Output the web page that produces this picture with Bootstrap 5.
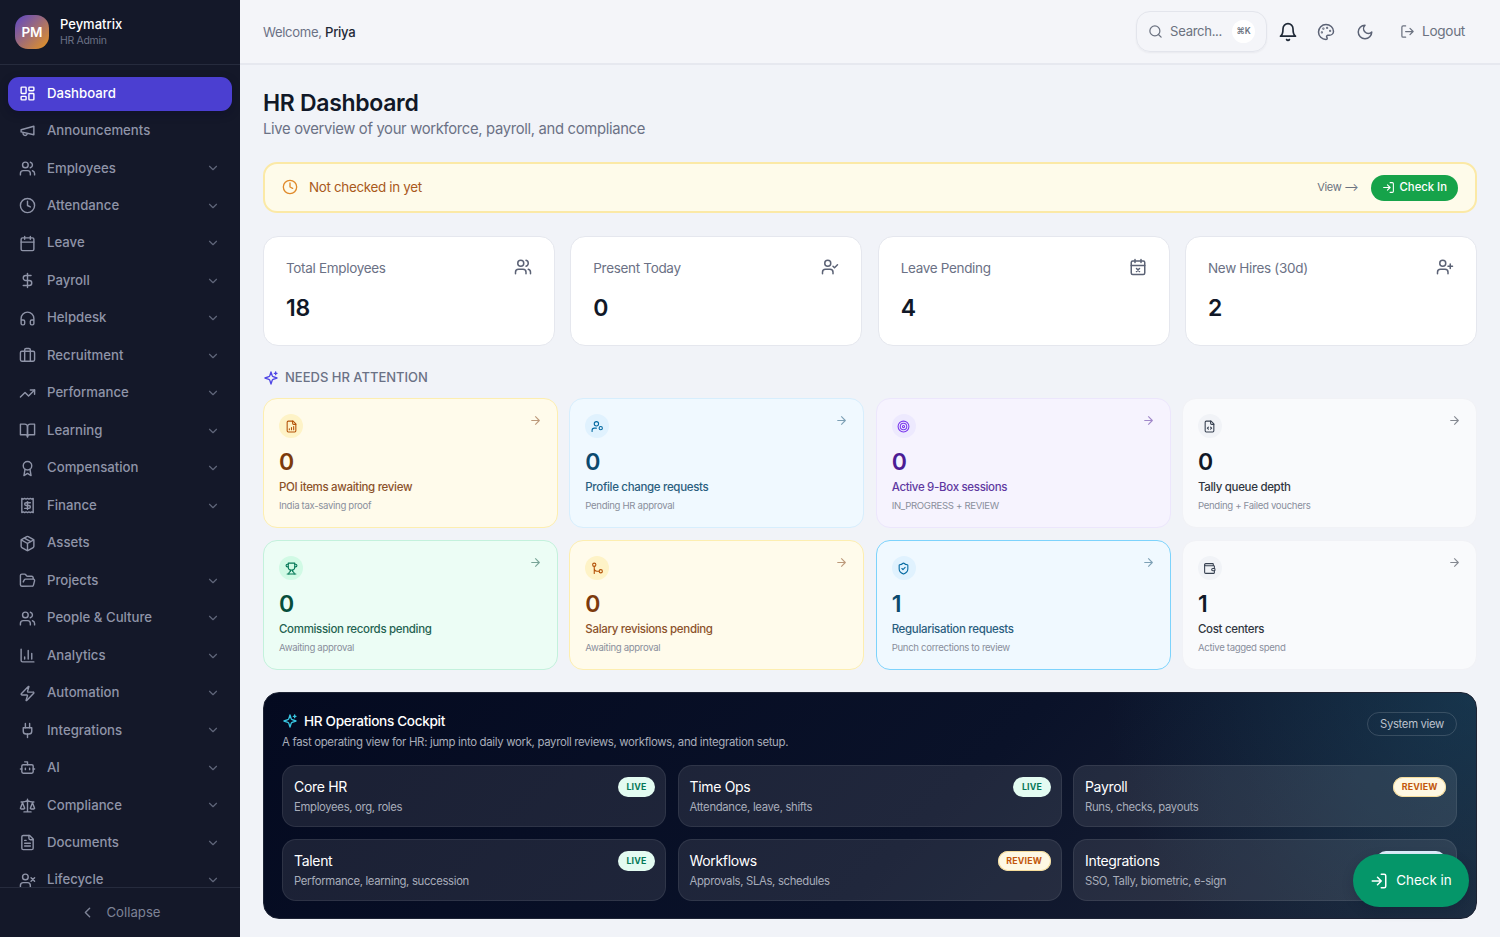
<!doctype html>
<html lang="en">
  <head>
    <meta charset="UTF-8" />
    <title>Peymatrix HR Dashboard</title>
    <link href="https://cdn.jsdelivr.net/npm/bootstrap@5.3.2/dist/css/bootstrap.min.css" rel="stylesheet" />
    <style>
      html, body { height: 937px; overflow: hidden; }
      body { font-family: Inter, "Noto Sans", sans-serif; background: #f1f3f8; color: #111827; letter-spacing: -0.02em; }
      .ic { fill: none; stroke: currentColor; stroke-width: 2; stroke-linecap: round; stroke-linejoin: round; flex: none; }
      .side { width: 240px; height: 937px; background: #141829; flex: none; }
      .side-top { height: 65px; padding: 0 15px; border-bottom: 1px solid #262b3d; }
      .logo-box { width: 34px; height: 34px; border-radius: 13px; color: #fff; font-size: 13.5px; font-weight: 600; letter-spacing: 0; background: linear-gradient(135deg, #5b46c9, #e8951f); }
      .brand-txt { margin-left: 3px; }
      .brand { color: #fff; font-size: 13px; font-weight: 500; line-height: 17px; letter-spacing: 0; }
      .brand-sub { color: #6b7185; font-size: 10.5px; line-height: 15px; }
      .side-nav { height: 822px; padding: 11.5px 8px 0; overflow: hidden; }
      .nav-row { height: 34px; margin-bottom: 3.47px; padding: 0 12px 0 11px; border-radius: 11px; color: #8f94a8; font-size: 13.2px; font-weight: 500; letter-spacing: 0; gap: 11px; }
      .nav-row.on { background: #4b3fd1; color: #fff; box-shadow: 0 3px 8px rgba(10, 10, 40, .4); }
      .nav-row .chev { margin-left: auto; color: #5f6579; }
      .side-foot { height: 50px; border-top: 1px solid #262b3d; color: #7d8296; font-size: 13.2px; letter-spacing: 0; gap: 10px; }
      .main-col { min-width: 0; }
      .top-bar { height: 65px; padding: 2px 23px 0; border-bottom: 2px solid #e6e8ef; background: #f4f5f9; }
      .welcome { font-size: 13.1px; color: #6b7185; }
      .welcome b { color: #1f2937; font-weight: 500; }
      .search-box { width: 131px; height: 41px; margin-top: -2px; padding: 0 11px; border: 1px solid #e3e5ec; border-radius: 14px; color: #6b7280; font-size: 13.1px; gap: 7px; box-shadow: 0 1px 2px rgba(20, 24, 41, .05); }
      .kbd-chip { width: 23px; height: 23px; border-radius: 50%; background: #fff; font-size: 8.5px; font-weight: 600; color: #6b7280; letter-spacing: 0; margin-left: auto; }
      .tool-bell { margin-left: 11px; margin-right: 19px; margin-top: -2px; color: #1f2937; }
      .tool-pal { margin-right: 21px; margin-top: -2px; color: #5b6275; }
      .tool-moon { margin-right: 20px; margin-top: -2px; color: #5b6275; }
      .logout { color: #6b7280; font-size: 13.6px; gap: 7px; margin-left: 6px; margin-right: 12px; margin-top: -2px; }
      .page { padding: 23px 23px 0; }
      .page-title { font-size: 23px; font-weight: 600; line-height: 30px; margin: 0; color: #111827; }
      .page-sub { font-size: 14.8px; line-height: 21px; padding-top: 1px; color: #6b7185; margin-bottom: 22px; }
      .notice { height: 51px; padding: 0 17px; background: #fefbea; border: 2px solid #fbe9a6; border-radius: 14px; margin-bottom: 23px; }
      .notice-txt { color: #a9591b; font-size: 13.4px; gap: 11px; }
      .view-lnk { color: #6b7280; font-size: 11px; margin-right: 12px; }
      .check-small { height: 26px; padding: 0 11px; background: #16a34a; color: #fff; font-size: 11.3px; font-weight: 500; border-radius: 13px; gap: 5px; border: 0; }
      .four-stats { display: grid; grid-template-columns: repeat(4, 1fr); gap: 15.3px; margin-bottom: 22px; }
      .stat-box { height: 110px; padding: 21px 22px; background: #fff; border: 1px solid #e5e7ee; border-radius: 15px; }
      .stat-lbl { font-size: 13.5px; color: #6b7185; }
      .stat-num { font-size: 23px; font-weight: 600; line-height: 28px; margin-top: 16px; color: #111827; }
      .sec-head { color: #6b7185; font-size: 13px; font-weight: 500; gap: 6px; height: 20px; margin-bottom: 10px; letter-spacing: 0; }
      .four-att { display: grid; grid-template-columns: repeat(4, 1fr); gap: 12px 11.3px; margin-bottom: 22px; }
      .att-box { position: relative; height: 130px; padding: 15px; border: 1.5px solid; border-radius: 14px; }
      .att-ico { width: 24px; height: 24px; border-radius: 50%; }
      .att-go { position: absolute; top: 15px; right: 15px; opacity: .5; }
      .att-num { font-size: 23px; font-weight: 600; line-height: 28px; margin-top: 10px; }
      .att-ttl { font-size: 11.5px; font-weight: 500; line-height: 16px; margin-top: 3px; opacity: .88; }
      .att-sub { font-size: 9.6px; line-height: 14px; margin-top: 4px; color: #8a8f9c; }
      .t-amber { background: #fffbeb; border-color: #fdeeb0; color: #7c3a0c; }
      .t-amber .att-ico { background: #fef3c7; color: #b45309; }
      .t-blue { background: #f0f9ff; border-color: #d7eefd; color: #0c4a6e; }
      .t-blue .att-ico { background: #e0f2fe; color: #0369a1; }
      .t-blue.lit { border-color: #7dd3fc; }
      .t-purple { background: #f6f3fe; border-color: #ece6fc; color: #4c1d95; }
      .t-purple .att-ico { background: #ede9fe; color: #7c3aed; }
      .t-green { background: #ecfdf5; border-color: #c3f1dc; color: #064e3b; }
      .t-green .att-ico { background: #d1fae5; color: #047857; }
      .t-plain { background: #f9fafc; border-color: #f1f2f6; color: #111827; }
      .t-plain .att-ico { background: #f1f3f7; color: #374151; }
      .cockpit { height: 227px; padding: 18px 19px 18px 18px; border-radius: 16px; border: 1px solid #1d2334; background: radial-gradient(circle at 100% 0, rgba(22, 84, 112, .42), transparent 30%), linear-gradient(135deg, #040a20 0%, #0a1229 55%, #1e2538 100%); }
      .cock-ttl { color: #fff; font-size: 13.6px; font-weight: 500; gap: 6px; line-height: 20px; }
      .cock-sub { color: #a8adba; font-size: 11.4px; line-height: 16px; margin-top: 3px; margin-bottom: 15px; }
      .sys-chip { height: 24px; margin-top: 1px; padding: 0 12px; border: 1px solid rgba(255, 255, 255, .15); border-radius: 12px; color: #bcc1cc; font-size: 11.3px; }
      .three-ops { display: grid; grid-template-columns: repeat(3, 1fr); gap: 12px 11.5px; }
      .op-box { height: 62px; padding: 11px 10px 11px 11px; background: rgba(255, 255, 255, .09); border: 1px solid rgba(255, 255, 255, .08); border-radius: 14px; }
      .op-ttl { color: #fff; font-size: 14px; line-height: 20px; }
      .op-sub { color: #a8adba; font-size: 11.3px; line-height: 16px; margin-top: 2px; }
      .tag-chip { height: 20px; padding: 0 8.5px; border-radius: 10px; font-size: 8.8px; font-weight: 700; letter-spacing: .02em; }
      .tag-live { background: #e3fbf1; color: #047857; }
      .tag-rev { background: #fef8e3; color: #c2570c; box-shadow: inset 0 0 0 1px #f5dc9a; }
      .tag-set { background: #e0f2fe; color: #0369a1; }
      .fab { position: absolute; left: 1353px; top: 854px; width: 116px; height: 53px; background: #059669; color: #fff; border: 0; border-radius: 27px; font-size: 13.4px; font-weight: 400; gap: 8px; box-shadow: 0 4px 12px rgba(5, 20, 40, .2); }
    </style>
  </head>
  <body>
    <svg width="0" height="0" class="position-absolute">
      <defs>
        <symbol id="i-dash" viewBox="0 0 24 24"><rect x="3" y="3" width="7" height="9" rx="1"/><rect x="14" y="3" width="7" height="5" rx="1"/><rect x="14" y="12" width="7" height="9" rx="1"/><rect x="3" y="16" width="7" height="5" rx="1"/></symbol>
        <symbol id="i-mega" viewBox="0 0 24 24"><path d="m3 11 18-5v12L3 14v-3z"/><path d="M11.6 16.8a3 3 0 1 1-5.8-1.6"/></symbol>
        <symbol id="i-users" viewBox="0 0 24 24"><path d="M16 21v-2a4 4 0 0 0-4-4H6a4 4 0 0 0-4 4v2"/><circle cx="9" cy="7" r="4"/><path d="M22 21v-2a4 4 0 0 0-3-3.87"/><path d="M16 3.13a4 4 0 0 1 0 7.75"/></symbol>
        <symbol id="i-clock" viewBox="0 0 24 24"><circle cx="12" cy="12" r="10"/><path d="M12 6v6l4 2"/></symbol>
        <symbol id="i-cal" viewBox="0 0 24 24"><rect x="3" y="4" width="18" height="18" rx="2"/><path d="M16 2v4M8 2v4M3 10h18"/></symbol>
        <symbol id="i-calx" viewBox="0 0 24 24"><rect x="3" y="4" width="18" height="18" rx="2"/><path d="M16 2v4M8 2v4M3 10h18m-7 4-4 4m0-4 4 4"/></symbol>
        <symbol id="i-dollar" viewBox="0 0 24 24"><path d="M12 2v20"/><path d="M17 5H9.5a3.5 3.5 0 0 0 0 7h5a3.5 3.5 0 0 1 0 7H6"/></symbol>
        <symbol id="i-head" viewBox="0 0 24 24"><path d="M3 14h3a2 2 0 0 1 2 2v3a2 2 0 0 1-2 2H5a2 2 0 0 1-2-2v-7a9 9 0 0 1 18 0v7a2 2 0 0 1-2 2h-1a2 2 0 0 1-2-2v-3a2 2 0 0 1 2-2h3"/></symbol>
        <symbol id="i-brief" viewBox="0 0 24 24"><path d="M16 20V4a2 2 0 0 0-2-2h-4a2 2 0 0 0-2 2v16"/><rect x="2" y="6" width="20" height="14" rx="2"/></symbol>
        <symbol id="i-trend" viewBox="0 0 24 24"><path d="M22 7 13.5 15.5 8.5 10.5 2 17"/><path d="M16 7h6v6"/></symbol>
        <symbol id="i-book" viewBox="0 0 24 24"><path d="M2 3h6a4 4 0 0 1 4 4v14a3 3 0 0 0-3-3H2z"/><path d="M22 3h-6a4 4 0 0 0-4 4v14a3 3 0 0 1 3-3h7z"/></symbol>
        <symbol id="i-award" viewBox="0 0 24 24"><circle cx="12" cy="8" r="6"/><path d="M15.477 12.89 17 22l-5-3-5 3 1.523-9.11"/></symbol>
        <symbol id="i-receipt" viewBox="0 0 24 24"><path d="M4 2v20l2-1 2 1 2-1 2 1 2-1 2 1 2-1 2 1V2l-2 1-2-1-2 1-2-1-2 1-2-1-2 1Z"/><path d="M16 8h-6a2 2 0 1 0 0 4h4a2 2 0 1 1 0 4H8"/><path d="M12 17.5v-11"/></symbol>
        <symbol id="i-pack" viewBox="0 0 24 24"><path d="M21 8a2 2 0 0 0-1-1.73l-7-4a2 2 0 0 0-2 0l-7 4A2 2 0 0 0 3 8v8a2 2 0 0 0 1 1.73l7 4a2 2 0 0 0 2 0l7-4A2 2 0 0 0 21 16Z"/><path d="m3.3 7 8.7 5 8.7-5M12 22V12m-4.5-7.73 9 5.15"/></symbol>
        <symbol id="i-folder" viewBox="0 0 24 24"><path d="m6 14 1.5-2.9A2 2 0 0 1 9.24 10H20a2 2 0 0 1 1.94 2.5l-1.54 6a2 2 0 0 1-1.95 1.5H4a2 2 0 0 1-2-2V5a2 2 0 0 1 2-2h3.9a2 2 0 0 1 1.69.9l.81 1.2a2 2 0 0 0 1.67.9H18a2 2 0 0 1 2 2v2"/></symbol>
        <symbol id="i-chart" viewBox="0 0 24 24"><path d="M3 3v16a2 2 0 0 0 2 2h16"/><path d="M18 17V9M13 17V5M8 17v-3"/></symbol>
        <symbol id="i-zap" viewBox="0 0 24 24"><path d="M4 14a1 1 0 0 1-.78-1.63l9.9-10.2a.5.5 0 0 1 .86.46l-1.92 6.02A1 1 0 0 0 13 10h7a1 1 0 0 1 .78 1.63l-9.9 10.2a.5.5 0 0 1-.86-.46l1.92-6.02A1 1 0 0 0 11 14z"/></symbol>
        <symbol id="i-plug" viewBox="0 0 24 24"><path d="M12 22v-5M9 8V2M15 8V2"/><path d="M18 8v5a4 4 0 0 1-4 4h-4a4 4 0 0 1-4-4V8Z"/></symbol>
        <symbol id="i-bot" viewBox="0 0 24 24"><path d="M12 8V4H8"/><rect x="4" y="8" width="16" height="12" rx="2"/><path d="M2 14h2M20 14h2M15 13v2M9 13v2"/></symbol>
        <symbol id="i-scale" viewBox="0 0 24 24"><path d="m16 16 3-8 3 8c-.87.65-1.92 1-3 1s-2.13-.35-3-1Z"/><path d="m2 16 3-8 3 8c-.87.65-1.92 1-3 1s-2.13-.35-3-1Z"/><path d="M7 21h10M12 3v18M3 7h2c2 0 5-1 7-2 2 1 5 2 7 2h2"/></symbol>
        <symbol id="i-file" viewBox="0 0 24 24"><path d="M15 2H6a2 2 0 0 0-2 2v16a2 2 0 0 0 2 2h12a2 2 0 0 0 2-2V7Z"/><path d="M14 2v4a2 2 0 0 0 2 2h4M10 9H8M16 13H8M16 17H8"/></symbol>
        <symbol id="i-filechart" viewBox="0 0 24 24"><path d="M15 2H6a2 2 0 0 0-2 2v16a2 2 0 0 0 2 2h12a2 2 0 0 0 2-2V7Z"/><path d="M14 2v4a2 2 0 0 0 2 2h4M8 18v-2M12 18v-4M16 18v-6"/></symbol>
        <symbol id="i-filecode" viewBox="0 0 24 24"><path d="M15 2H6a2 2 0 0 0-2 2v16a2 2 0 0 0 2 2h12a2 2 0 0 0 2-2V7Z"/><path d="M14 2v4a2 2 0 0 0 2 2h4m-10 5-2 2 2 2m4 0 2-2-2-2"/></symbol>
        <symbol id="i-userx" viewBox="0 0 24 24"><path d="M16 21v-2a4 4 0 0 0-4-4H6a4 4 0 0 0-4 4v2"/><circle cx="9" cy="7" r="4"/><path d="m17 8 5 5m0-5-5 5"/></symbol>
        <symbol id="i-usercheck" viewBox="0 0 24 24"><path d="M16 21v-2a4 4 0 0 0-4-4H6a4 4 0 0 0-4 4v2"/><circle cx="9" cy="7" r="4"/><path d="m16 11 2 2 4-4"/></symbol>
        <symbol id="i-userplus" viewBox="0 0 24 24"><path d="M16 21v-2a4 4 0 0 0-4-4H6a4 4 0 0 0-4 4v2"/><circle cx="9" cy="7" r="4"/><path d="M19 8v6M22 11h-6"/></symbol>
        <symbol id="i-usercog" viewBox="0 0 24 24"><circle cx="10" cy="7" r="4"/><path d="M10 15H6a4 4 0 0 0-4 4v2"/><circle cx="18" cy="15" r="3"/></symbol>
        <symbol id="i-target" viewBox="0 0 24 24"><circle cx="12" cy="12" r="10"/><circle cx="12" cy="12" r="6"/><circle cx="12" cy="12" r="2"/></symbol>
        <symbol id="i-trophy" viewBox="0 0 24 24"><path d="M6 9H4.5a2.5 2.5 0 0 1 0-5H6M18 9h1.5a2.5 2.5 0 0 0 0-5H18M4 22h16"/><path d="M10 14.66V17c0 .55-.47.98-.97 1.21C7.85 18.75 7 20.24 7 22M14 14.66V17c0 .55.47.98.97 1.21C16.15 18.75 17 20.24 17 22"/><path d="M18 2H6v7a6 6 0 0 0 12 0V2Z"/></symbol>
        <symbol id="i-route" viewBox="0 0 24 24"><circle cx="6" cy="5" r="3"/><path d="M6 8v13M6 12a5 5 0 0 0 5 5h4"/><circle cx="18" cy="17" r="3"/></symbol>
        <symbol id="i-shield" viewBox="0 0 24 24"><path d="M20 13c0 5-3.5 7.5-7.66 8.95a1 1 0 0 1-.67-.01C7.5 20.5 4 18 4 13V6a1 1 0 0 1 1-1c2 0 4.5-1.2 6.24-2.72a1.17 1.17 0 0 1 1.52 0C14.51 3.81 17 5 19 5a1 1 0 0 1 1 1z"/><path d="m9 12 2 2 4-4"/></symbol>
        <symbol id="i-wallet" viewBox="0 0 24 24"><path d="M19 7V4a1 1 0 0 0-1-1H5a2 2 0 0 0 0 4h15a1 1 0 0 1 1 1v4h-3a2 2 0 0 0 0 4h3a1 1 0 0 0 1-1v-2a1 1 0 0 0-1-1"/><path d="M3 5v14a2 2 0 0 0 2 2h15a1 1 0 0 0 1-1v-4"/></symbol>
        <symbol id="i-down" viewBox="0 0 24 24"><path d="m6 9 6 6 6-6"/></symbol>
        <symbol id="i-left" viewBox="0 0 24 24"><path d="m15 18-6-6 6-6"/></symbol>
        <symbol id="i-search" viewBox="0 0 24 24"><circle cx="11" cy="11" r="8"/><path d="m21 21-4.3-4.3"/></symbol>
        <symbol id="i-bell" viewBox="0 0 24 24"><path d="M6 8a6 6 0 0 1 12 0c0 7 3 9 3 9H3s3-2 3-9"/><path d="M10.3 21a1.94 1.94 0 0 0 3.4 0"/></symbol>
        <symbol id="i-palette" viewBox="0 0 24 24"><circle cx="13.5" cy="6.5" r=".5"/><circle cx="17.5" cy="10.5" r=".5"/><circle cx="8.5" cy="7.5" r=".5"/><circle cx="6.5" cy="12.5" r=".5"/><path d="M12 2C6.5 2 2 6.5 2 12s4.5 10 10 10c.926 0 1.648-.746 1.648-1.688 0-.437-.18-.835-.437-1.125-.29-.289-.438-.652-.438-1.125a1.64 1.64 0 0 1 1.668-1.668h1.996c3.051 0 5.555-2.503 5.555-5.554C21.965 6.012 17.461 2 12 2z"/></symbol>
        <symbol id="i-moon" viewBox="0 0 24 24"><path d="M12 3a6 6 0 0 0 9 9 9 9 0 1 1-9-9Z"/></symbol>
        <symbol id="i-out" viewBox="0 0 24 24"><path d="M9 21H5a2 2 0 0 1-2-2V5a2 2 0 0 1 2-2h4m7 14 5-5-5-5m5 5H9"/></symbol>
        <symbol id="i-in" viewBox="0 0 24 24"><path d="M15 3h4a2 2 0 0 1 2 2v14a2 2 0 0 1-2 2h-4m-5-4 5-5-5-5m5 5H3"/></symbol>
        <symbol id="i-spark" viewBox="0 0 24 24"><path d="m12 3-1.912 5.813a2 2 0 0 1-1.275 1.275L3 12l5.813 1.912a2 2 0 0 1 1.275 1.275L12 21l1.912-5.813a2 2 0 0 1 1.275-1.275L21 12l-5.813-1.912a2 2 0 0 1-1.275-1.275L12 3Z"/><path d="M19 3v4M17 5h4"/></symbol>
        <symbol id="i-arrow" viewBox="0 0 24 24"><path d="M5 12h14m-7-7 7 7-7 7"/></symbol>
      </defs>
    </svg>

    <div class="d-flex">
      <aside class="side d-flex flex-column">
        <div class="side-top d-flex align-items-center gap-2">
          <div class="logo-box d-flex align-items-center justify-content-center">PM</div>
          <div class="brand-txt">
            <div class="brand">Peymatrix</div>
            <div class="brand-sub">HR Admin</div>
          </div>
        </div>
        <nav class="side-nav">
          <div class="nav-row on d-flex align-items-center"><svg class="ic" width="17" height="17"><use href="#i-dash"/></svg>Dashboard</div>
          <div class="nav-row d-flex align-items-center"><svg class="ic" width="17" height="17"><use href="#i-mega"/></svg>Announcements</div>
          <div class="nav-row d-flex align-items-center"><svg class="ic" width="17" height="17"><use href="#i-users"/></svg>Employees<svg class="ic chev" width="14" height="14"><use href="#i-down"/></svg></div>
          <div class="nav-row d-flex align-items-center"><svg class="ic" width="17" height="17"><use href="#i-clock"/></svg>Attendance<svg class="ic chev" width="14" height="14"><use href="#i-down"/></svg></div>
          <div class="nav-row d-flex align-items-center"><svg class="ic" width="17" height="17"><use href="#i-cal"/></svg>Leave<svg class="ic chev" width="14" height="14"><use href="#i-down"/></svg></div>
          <div class="nav-row d-flex align-items-center"><svg class="ic" width="17" height="17"><use href="#i-dollar"/></svg>Payroll<svg class="ic chev" width="14" height="14"><use href="#i-down"/></svg></div>
          <div class="nav-row d-flex align-items-center"><svg class="ic" width="17" height="17"><use href="#i-head"/></svg>Helpdesk<svg class="ic chev" width="14" height="14"><use href="#i-down"/></svg></div>
          <div class="nav-row d-flex align-items-center"><svg class="ic" width="17" height="17"><use href="#i-brief"/></svg>Recruitment<svg class="ic chev" width="14" height="14"><use href="#i-down"/></svg></div>
          <div class="nav-row d-flex align-items-center"><svg class="ic" width="17" height="17"><use href="#i-trend"/></svg>Performance<svg class="ic chev" width="14" height="14"><use href="#i-down"/></svg></div>
          <div class="nav-row d-flex align-items-center"><svg class="ic" width="17" height="17"><use href="#i-book"/></svg>Learning<svg class="ic chev" width="14" height="14"><use href="#i-down"/></svg></div>
          <div class="nav-row d-flex align-items-center"><svg class="ic" width="17" height="17"><use href="#i-award"/></svg>Compensation<svg class="ic chev" width="14" height="14"><use href="#i-down"/></svg></div>
          <div class="nav-row d-flex align-items-center"><svg class="ic" width="17" height="17"><use href="#i-receipt"/></svg>Finance<svg class="ic chev" width="14" height="14"><use href="#i-down"/></svg></div>
          <div class="nav-row d-flex align-items-center"><svg class="ic" width="17" height="17"><use href="#i-pack"/></svg>Assets</div>
          <div class="nav-row d-flex align-items-center"><svg class="ic" width="17" height="17"><use href="#i-folder"/></svg>Projects<svg class="ic chev" width="14" height="14"><use href="#i-down"/></svg></div>
          <div class="nav-row d-flex align-items-center"><svg class="ic" width="17" height="17"><use href="#i-users"/></svg>People &amp; Culture<svg class="ic chev" width="14" height="14"><use href="#i-down"/></svg></div>
          <div class="nav-row d-flex align-items-center"><svg class="ic" width="17" height="17"><use href="#i-chart"/></svg>Analytics<svg class="ic chev" width="14" height="14"><use href="#i-down"/></svg></div>
          <div class="nav-row d-flex align-items-center"><svg class="ic" width="17" height="17"><use href="#i-zap"/></svg>Automation<svg class="ic chev" width="14" height="14"><use href="#i-down"/></svg></div>
          <div class="nav-row d-flex align-items-center"><svg class="ic" width="17" height="17"><use href="#i-plug"/></svg>Integrations<svg class="ic chev" width="14" height="14"><use href="#i-down"/></svg></div>
          <div class="nav-row d-flex align-items-center"><svg class="ic" width="17" height="17"><use href="#i-bot"/></svg>AI<svg class="ic chev" width="14" height="14"><use href="#i-down"/></svg></div>
          <div class="nav-row d-flex align-items-center"><svg class="ic" width="17" height="17"><use href="#i-scale"/></svg>Compliance<svg class="ic chev" width="14" height="14"><use href="#i-down"/></svg></div>
          <div class="nav-row d-flex align-items-center"><svg class="ic" width="17" height="17"><use href="#i-file"/></svg>Documents<svg class="ic chev" width="14" height="14"><use href="#i-down"/></svg></div>
          <div class="nav-row d-flex align-items-center"><svg class="ic" width="17" height="17"><use href="#i-userx"/></svg>Lifecycle<svg class="ic chev" width="14" height="14"><use href="#i-down"/></svg></div>
        </nav>
        <div class="side-foot d-flex align-items-center justify-content-center"><svg class="ic" width="17" height="17"><use href="#i-left"/></svg>Collapse</div>
      </aside>

      <div class="main-col flex-grow-1">
        <header class="top-bar d-flex align-items-center">
          <div class="welcome">Welcome, <b>Priya</b></div>
          <div class="search-box ms-auto d-flex align-items-center"><svg class="ic" width="15" height="15"><use href="#i-search"/></svg>Search...<span class="kbd-chip d-flex align-items-center justify-content-center">⌘K</span></div>
          <svg class="ic tool-bell" width="20" height="20"><use href="#i-bell"/></svg>
          <svg class="ic tool-pal" width="18" height="18"><use href="#i-palette"/></svg>
          <svg class="ic tool-moon" width="18" height="18"><use href="#i-moon"/></svg>
          <div class="logout d-flex align-items-center"><svg class="ic" width="15" height="15"><use href="#i-out"/></svg>Logout</div>
        </header>

        <main class="page">
          <h1 class="page-title">HR Dashboard</h1>
          <div class="page-sub">Live overview of your workforce, payroll, and compliance</div>

          <div class="notice d-flex align-items-center">
            <div class="notice-txt d-flex align-items-center"><svg class="ic" width="16" height="16" color="#e08a2b"><use href="#i-clock"/></svg>Not checked in yet</div>
            <div class="ms-auto d-flex align-items-center">
              <span class="view-lnk">View ⟶</span>
              <button class="check-small d-flex align-items-center"><svg class="ic" width="13" height="13"><use href="#i-in"/></svg>Check In</button>
            </div>
          </div>

          <div class="four-stats">
            <div class="stat-box">
              <div class="d-flex justify-content-between align-items-start"><span class="stat-lbl">Total Employees</span><svg class="ic" width="18" height="18" color="#5b6275"><use href="#i-users"/></svg></div>
              <div class="stat-num">18</div>
            </div>
            <div class="stat-box">
              <div class="d-flex justify-content-between align-items-start"><span class="stat-lbl">Present Today</span><svg class="ic" width="18" height="18" color="#5b6275"><use href="#i-usercheck"/></svg></div>
              <div class="stat-num">0</div>
            </div>
            <div class="stat-box">
              <div class="d-flex justify-content-between align-items-start"><span class="stat-lbl">Leave Pending</span><svg class="ic" width="18" height="18" color="#5b6275"><use href="#i-calx"/></svg></div>
              <div class="stat-num">4</div>
            </div>
            <div class="stat-box">
              <div class="d-flex justify-content-between align-items-start"><span class="stat-lbl">New Hires (30d)</span><svg class="ic" width="18" height="18" color="#5b6275"><use href="#i-userplus"/></svg></div>
              <div class="stat-num">2</div>
            </div>
          </div>

          <div class="sec-head d-flex align-items-center"><svg class="ic" width="16" height="16" color="#4f46e5"><use href="#i-spark"/></svg>NEEDS HR ATTENTION</div>

          <div class="four-att">
            <div class="att-box t-amber">
              <div class="att-ico d-flex align-items-center justify-content-center"><svg class="ic" width="13" height="13"><use href="#i-filechart"/></svg></div>
              <svg class="ic att-go" width="13" height="13"><use href="#i-arrow"/></svg>
              <div class="att-num">0</div><div class="att-ttl">POI items awaiting review</div><div class="att-sub">India tax-saving proof</div>
            </div>
            <div class="att-box t-blue">
              <div class="att-ico d-flex align-items-center justify-content-center"><svg class="ic" width="13" height="13"><use href="#i-usercog"/></svg></div>
              <svg class="ic att-go" width="13" height="13"><use href="#i-arrow"/></svg>
              <div class="att-num">0</div><div class="att-ttl">Profile change requests</div><div class="att-sub">Pending HR approval</div>
            </div>
            <div class="att-box t-purple">
              <div class="att-ico d-flex align-items-center justify-content-center"><svg class="ic" width="13" height="13"><use href="#i-target"/></svg></div>
              <svg class="ic att-go" width="13" height="13"><use href="#i-arrow"/></svg>
              <div class="att-num">0</div><div class="att-ttl">Active 9-Box sessions</div><div class="att-sub">IN_PROGRESS + REVIEW</div>
            </div>
            <div class="att-box t-plain">
              <div class="att-ico d-flex align-items-center justify-content-center"><svg class="ic" width="13" height="13"><use href="#i-filecode"/></svg></div>
              <svg class="ic att-go" width="13" height="13"><use href="#i-arrow"/></svg>
              <div class="att-num">0</div><div class="att-ttl">Tally queue depth</div><div class="att-sub">Pending + Failed vouchers</div>
            </div>
            <div class="att-box t-green">
              <div class="att-ico d-flex align-items-center justify-content-center"><svg class="ic" width="13" height="13"><use href="#i-trophy"/></svg></div>
              <svg class="ic att-go" width="13" height="13"><use href="#i-arrow"/></svg>
              <div class="att-num">0</div><div class="att-ttl">Commission records pending</div><div class="att-sub">Awaiting approval</div>
            </div>
            <div class="att-box t-amber">
              <div class="att-ico d-flex align-items-center justify-content-center"><svg class="ic" width="13" height="13"><use href="#i-route"/></svg></div>
              <svg class="ic att-go" width="13" height="13"><use href="#i-arrow"/></svg>
              <div class="att-num">0</div><div class="att-ttl">Salary revisions pending</div><div class="att-sub">Awaiting approval</div>
            </div>
            <div class="att-box t-blue lit">
              <div class="att-ico d-flex align-items-center justify-content-center"><svg class="ic" width="13" height="13"><use href="#i-shield"/></svg></div>
              <svg class="ic att-go" width="13" height="13"><use href="#i-arrow"/></svg>
              <div class="att-num">1</div><div class="att-ttl">Regularisation requests</div><div class="att-sub">Punch corrections to review</div>
            </div>
            <div class="att-box t-plain">
              <div class="att-ico d-flex align-items-center justify-content-center"><svg class="ic" width="13" height="13"><use href="#i-wallet"/></svg></div>
              <svg class="ic att-go" width="13" height="13"><use href="#i-arrow"/></svg>
              <div class="att-num">1</div><div class="att-ttl">Cost centers</div><div class="att-sub">Active tagged spend</div>
            </div>
          </div>

          <section class="cockpit">
            <div class="d-flex justify-content-between align-items-start">
              <div>
                <div class="cock-ttl d-flex align-items-center"><svg class="ic" width="16" height="16" color="#38c6e0"><use href="#i-spark"/></svg>HR Operations Cockpit</div>
                <div class="cock-sub">A fast operating view for HR: jump into daily work, payroll reviews, workflows, and integration setup.</div>
              </div>
              <span class="sys-chip d-flex align-items-center">System view</span>
            </div>
            <div class="three-ops">
              <div class="op-box d-flex justify-content-between align-items-start"><div><div class="op-ttl">Core HR</div><div class="op-sub">Employees, org, roles</div></div><span class="tag-chip tag-live d-flex align-items-center">LIVE</span></div>
              <div class="op-box d-flex justify-content-between align-items-start"><div><div class="op-ttl">Time Ops</div><div class="op-sub">Attendance, leave, shifts</div></div><span class="tag-chip tag-live d-flex align-items-center">LIVE</span></div>
              <div class="op-box d-flex justify-content-between align-items-start"><div><div class="op-ttl">Payroll</div><div class="op-sub">Runs, checks, payouts</div></div><span class="tag-chip tag-rev d-flex align-items-center">REVIEW</span></div>
              <div class="op-box d-flex justify-content-between align-items-start"><div><div class="op-ttl">Talent</div><div class="op-sub">Performance, learning, succession</div></div><span class="tag-chip tag-live d-flex align-items-center">LIVE</span></div>
              <div class="op-box d-flex justify-content-between align-items-start"><div><div class="op-ttl">Workflows</div><div class="op-sub">Approvals, SLAs, schedules</div></div><span class="tag-chip tag-rev d-flex align-items-center">REVIEW</span></div>
              <div class="op-box d-flex justify-content-between align-items-start"><div><div class="op-ttl">Integrations</div><div class="op-sub">SSO, Tally, biometric, e-sign</div></div><span class="tag-chip tag-set d-flex align-items-center">CONFIGURE</span></div>
            </div>
          </section>
        </main>
      </div>
    </div>

    <button class="fab d-flex align-items-center justify-content-center"><svg class="ic" width="18" height="18"><use href="#i-in"/></svg>Check in</button>
  </body>
</html>
